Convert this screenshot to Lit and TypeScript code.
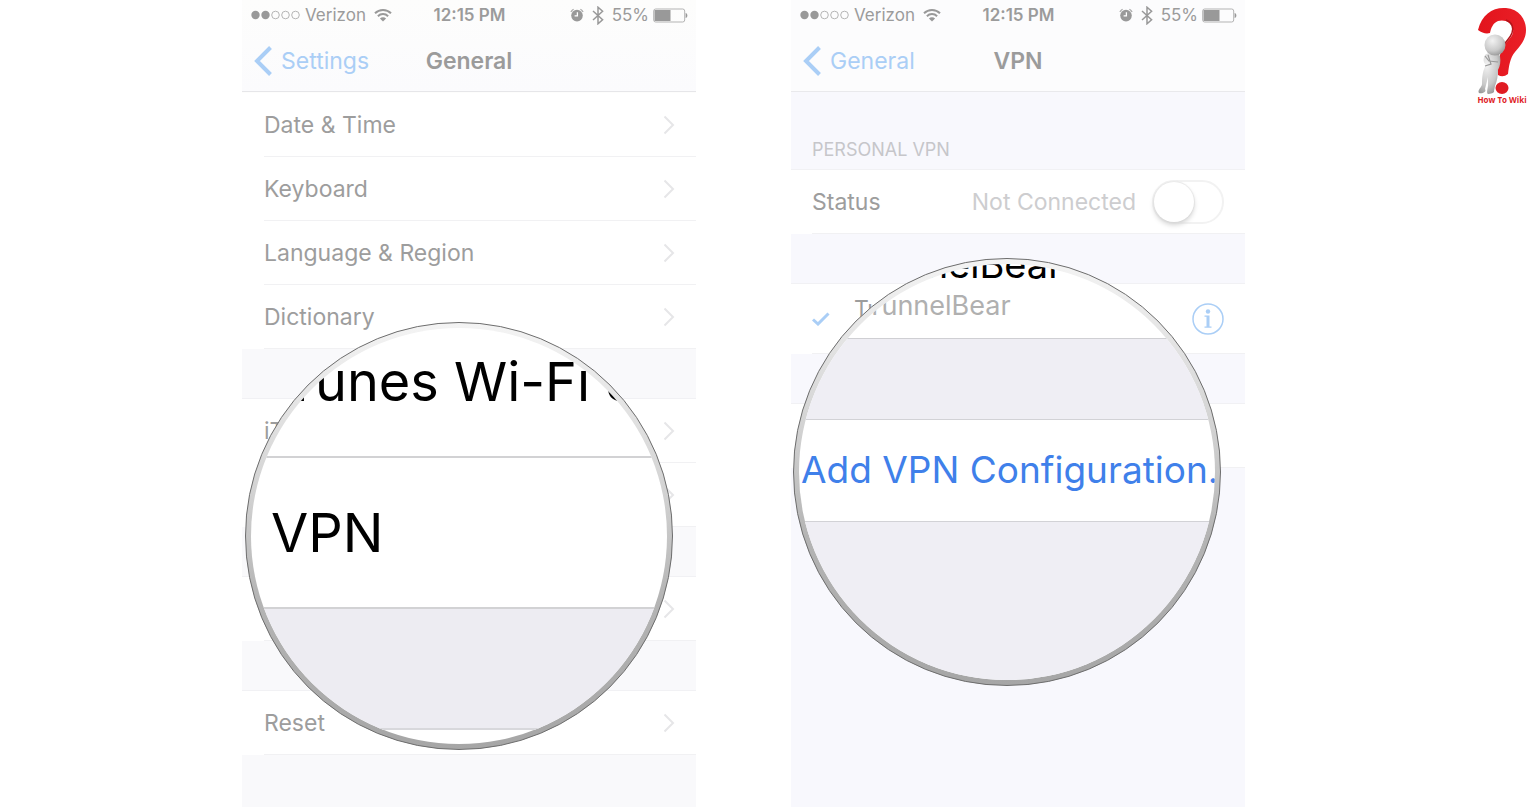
import { LitElement, html, css, svg, nothing } from "lit";
import { customElement, property } from "lit/decorators.js";

const shared = css`
  * {
    box-sizing: border-box;
  }
  a,
  button {
    font: inherit;
    color: inherit;
    text-decoration: none;
    background: none;
    border: 0;
    padding: 0;
    text-align: left;
  }
  svg {
    display: block;
    flex: none;
  }
`;

@customElement("phone-header")
export class PhoneHeader extends LitElement {
  @property() heading = "";
  @property() back = "";

  static styles = [
    shared,
    css`
      :host {
        display: block;
        border-bottom: 1px solid #e9e9ec;
        color: #9b9b9b;
      }
      .status {
        display: grid;
        grid-template-columns: 1fr auto 1fr;
        align-items: center;
        height: 30px;
        padding: 0 8px 0 9px;
        font-size: 17px;
      }
      .side {
        display: flex;
        align-items: center;
        gap: 8px;
      }
      .carrier {
        display: flex;
        align-items: center;
        gap: 5px;
      }
      .end {
        justify-content: flex-end;
      }
      .charge {
        display: flex;
        align-items: center;
        gap: 4px;
      }
      .time {
        font-weight: 600;
      }
      .nav {
        display: grid;
        grid-template-columns: 1fr auto 1fr;
        align-items: center;
        height: 61px;
        padding: 0 12px;
        font-size: 23px;
      }
      .back {
        display: flex;
        align-items: center;
        gap: 9px;
        color: #aacef6;
      }
      h1 {
        margin: 0;
        font-size: 23px;
        font-weight: 600;
      }
    `,
  ];

  render() {
    return html`
      <div class="status">
        <div class="side">
          <span class="carrier">
            <svg width="49" height="10" viewBox="0 0 49 10">
              ${[0, 1, 2, 3, 4].map(
                (i) => svg`<circle cx=${4.5 + i * 10} cy="5" r=${i < 2 ? 4.2 : 3.8}
                  fill=${i < 2 ? "#999" : "none"} stroke=${i < 2 ? "none" : "#b5b5b5"} />`
              )}
            </svg>
            Verizon
          </span>
          <svg width="18" height="14" viewBox="0 0 18 14" fill="none" stroke="#999" stroke-width="2">
            <path d="M1 5.2a11.4 11.4 0 0 1 16 0M3.9 8.2a7.3 7.3 0 0 1 10.2 0" />
            <path d="M9 13.6 5.9 10.5a4.4 4.4 0 0 1 6.2 0z" fill="#999" stroke="none" />
          </svg>
        </div>
        <span class="time">12:15 PM</span>
        <div class="side end">
          <svg width="14" height="14" viewBox="0 0 14 14">
            <circle cx="7" cy="7.6" r="5.8" fill="#999" />
            <path d="M.9 4A7 7 0 0 1 3.6 1.2M13.1 4a7 7 0 0 0-2.7-2.8" fill="none" stroke="#aaa" stroke-width="1.3" />
            <path d="M7.4 4.2v3.7H4.6" fill="none" stroke="#fff" stroke-width="1.3" />
          </svg>
          <svg width="12" height="19" viewBox="0 0 12 19" fill="none" stroke="#999" stroke-width="1.5">
            <path d="m1 5 9.6 8.8L6 17.8V1.2l4.6 4L1 14" />
          </svg>
          <span class="charge">
            55%
            <svg width="35" height="15" viewBox="0 0 35 15">
              <rect x=".7" y="1" width="31" height="13" rx="2" fill="none" stroke="#b3b3b3" />
              <path d="M1.5 2h16v11h-16z" fill="#999" />
              <path d="M32.6 5c2.4.6 2.4 4.4 0 5z" fill="#999" />
            </svg>
          </span>
        </div>
      </div>
      <nav class="nav">
        <a class="back" href="#">
          <svg width="18" height="30" viewBox="0 0 18 30" fill="none" stroke="#aacef6" stroke-width="4">
            <path d="M16.5 1.5 3 15l13.500 13.500" />
          </svg>
          ${this.back}
        </a>
        <h1>${this.heading}</h1>
        <span></span>
      </nav>
    `;
  }
}

@customElement("zoom-lens")
export class ZoomLens extends LitElement {
  static styles = css`
    :host {
      display: block;
      box-sizing: border-box;
      width: 428px;
      height: 428px;
      border: 1px solid #6d6d6d;
      border-radius: 50%;
      padding: 5px;
      background: linear-gradient(#f4f4f4, #d2d2d2 40%, #b4b4b4 65%, #a6a6a6);
    }
    .glass {
      display: flex;
      flex-direction: column;
      height: 100%;
      overflow: hidden;
      border-radius: 50%;
      background: #fff;
    }
  `;

  render() {
    return html`<div class="glass"><slot></slot></div>`;
  }
}

interface Item {
  label: string;
  name?: string;
}

const groups: Item[][] = [
  [{ label: "Date & Time" }, { label: "Keyboard" }, { label: "Language & Region" }, { label: "Dictionary" }],
  [{ label: "iTunes Wi-Fi Sync" }, { label: "", name: "VPN" }],
  [{ label: "", name: "Regulatory" }],
  [{ label: "Reset" }],
];

@customElement("app-root")
export class AppRoot extends LitElement {
  static styles = [
    shared,
    css`
      :host {
        display: block;
        position: relative;
        overflow: hidden;
        height: 100vh;
        min-height: 760px;
        background: #fff;
        font-family: Inter, "Liberation Sans", sans-serif;
        font-size: 23px;
        color: #9d9d9d;
      }
      .stage {
        display: flex;
        justify-content: center;
        gap: 95px;
        height: 100%;
        padding-right: 49px;
      }
      .phone {
        position: relative;
        flex: 0 1 454px;
        min-width: 0;
      }
      .general {
        background: #f9f9fb;
      }
      .vpn {
        background: #f8f8fd;
      }
      .general phone-header {
        background: linear-gradient(#fdfdfc, #fbfbfd);
        border-bottom: 3px double #e6e6e9;
      }
      .vpn phone-header {
        background: #fcfcfd;
      }
      .group {
        list-style: none;
        margin: 0 0 50px;
        padding: 0 0 0 22px;
        background: #fff;
        box-shadow: 0 -1px #f1f1f4;
      }
      .vpn .group {
        padding-left: 21px;
      }
      .row {
        display: flex;
        align-items: center;
        justify-content: space-between;
        height: 64px;
        padding-right: 21px;
        border-bottom: 1px solid #f1f1f3;
      }
      .group.first {
        margin-top: -1px;
        box-shadow: none;
      }
      .caption {
        margin: 0;
        padding: 47px 21px 9px;
        font-size: 18px;
        font-weight: 400;
        line-height: 22px;
        color: #c6c6ca;
      }
      .status {
        display: flex;
        align-items: center;
        gap: 16px;
        color: #cdcdcf;
      }
      .switch {
        appearance: none;
        display: block;
        width: 72px;
        height: 44px;
        margin: 0;
        border: 2px solid #f2f2f2;
        border-radius: 22px;
        background: #fff;
      }
      .switch::before {
        content: "";
        display: block;
        width: 40px;
        height: 40px;
        border-radius: 50%;
        background: #fff;
        box-shadow: 0 3px 5px #d4d4d4, 0 0 1px 1px #ececec;
      }
      .tall {
        height: 70px;
      }
      .connection {
        display: flex;
        align-items: center;
        gap: 24px;
      }
      .connection span {
        padding-bottom: 20px;
      }
      .lens {
        position: absolute;
      }
      .lens-general {
        left: 3px;
        top: 322px;
      }
      .lens-vpn {
        left: 2px;
        top: 258px;
      }
      .big {
        flex: none;
        display: flex;
        align-items: center;
        height: 151px;
        padding-left: 20px;
        border-bottom: 2px solid #d2d2d4;
        font-size: 54px;
        white-space: nowrap;
        color: #000;
      }
      .cut {
        margin-top: -21px;
      }
      .space {
        flex: none;
        height: 121px;
        background: #edecf2;
        border-bottom: 2px solid #d8d8dc;
      }
      .peek {
        flex: none;
        display: flex;
        flex-direction: column;
        gap: 6px;
        height: 75px;
        border-bottom: 1px solid #cfcfd3;
        line-height: 36px;
      }
      .peek-large {
        margin-top: -18px;
        padding-left: 60px;
        font-size: 38px;
        color: #000;
      }
      .peek-small {
        padding-left: 67px;
        font-size: 27px;
        color: #b0b0b0;
      }
      .band {
        flex: none;
        height: 81px;
        background: #efeef4;
        border-bottom: 1px solid #d2d2d6;
      }
      .config {
        flex: none;
        height: 102px;
        padding: 0 0 2px 2px;
        border-bottom: 1px solid #d2d2d6;
        font-size: 37px;
        white-space: nowrap;
        color: #3f80ea;
      }
      .rest {
        flex: 1;
        background: #efeef4;
      }
      .logo {
        position: absolute;
        top: 6px;
        right: 9px;
        display: flex;
        flex-direction: column;
        align-items: center;
        font: 700 8px/10px "Open Sans", sans-serif;
        color: #e0201f;
      }
    `,
  ];

  private general() {
    return html`
      <section class="phone general">
        <phone-header heading="General" back="Settings"></phone-header>
        ${groups.map(
          (items, g) => html`<ul class="group ${g === 0 ? "first" : ""}">
            ${items.map(
              (item) => html`<li>
                <a class="row" href="#" aria-label=${item.name ?? nothing}>
                  <span>${item.label}</span>
                  <svg width="12" height="20" viewBox="0 0 12 20" fill="none" stroke="#e6e6e8" stroke-width="2">
                    <path d="m1.5 1.5 8.500 8.500-8.500 8.500" />
                  </svg>
                </a>
              </li>`
            )}
          </ul>`
        )}
        <zoom-lens class="lens lens-general">
          <div class="big cut">iTunes Wi-Fi Sync</div>
          <div class="big">VPN</div>
          <div class="space"></div>
        </zoom-lens>
      </section>
    `;
  }

  private vpn() {
    return html`
      <section class="phone vpn">
        <phone-header heading="VPN" back="General"></phone-header>
        <h2 class="caption">PERSONAL VPN</h2>
        <div class="group">
          <div class="row">
            <label for="status">Status</label>
            <span class="status">
              Not Connected
              <input id="status" class="switch" type="checkbox" role="switch" />
            </span>
          </div>
        </div>
        <div class="group">
          <div class="row tall">
            <span class="connection">
              <svg width="18" height="14" viewBox="0 0 18 14" fill="none" stroke="#aacef6" stroke-width="3">
                <path d="m1 7.500 5 4.500L16.500 1.500" />
              </svg>
              <span>TunnelBear</span>
            </span>
            <button aria-label="TunnelBear details">
              <svg width="32" height="32" viewBox="0 0 32 32">
                <circle cx="16" cy="16" r="15" fill="none" stroke="#aacef6" stroke-width="1.5" />
                <circle cx="16" cy="8.5" r="2.2" fill="#aacef6" />
                <path d="M12.500 12.500h5v11h2v1.300h-7v-1.300h2v-9.700h-2z" fill="#aacef6" />
              </svg>
            </button>
          </div>
        </div>
        <div class="group">
          <div class="row"></div>
        </div>
        <zoom-lens class="lens lens-vpn">
          <div class="peek">
            <div class="peek-large">TunnelBear</div>
            <div class="peek-small">TunnelBear</div>
          </div>
          <div class="band"></div>
          <button class="config">Add VPN Configuration...</button>
          <div class="rest"></div>
        </zoom-lens>
      </section>
    `;
  }

  private logo() {
    return html`
      <a class="logo" href="#">
        <svg width="50" height="89" viewBox="0 0 50 89">
          <defs>
            <radialGradient id="skin" cx=".38" cy=".3" r=".8">
              <stop offset="0" stop-color="#f2f2f2" />
              <stop offset=".6" stop-color="#c9c9c9" />
              <stop offset="1" stop-color="#8c8c8c" />
            </radialGradient>
            <linearGradient id="red" x1="0" x2="1">
              <stop offset="0" stop-color="#e2141c" />
              <stop offset="1" stop-color="#ea1f27" />
            </linearGradient>
          </defs>
          <path
            d="M1 24C5 8 16 1 29 2c13 1 20 11 20 22 0 10-6 16-11 22-5 6-6 14-7 22q-5 4-10 1c-1-13 2-23 7-31 5-6 9-9 8-15-1-7-9-10-15-8-5 2-7 7-8 12-4 1-8 0-12-3z"
            fill="url(#red)" />
          <path d="M29 14c6 2 8 8 6 13-2 6-8 9-10 16" fill="none" stroke="#b3151b" stroke-width="1.5" />
          <ellipse cx="25" cy="82" rx="6.500" ry="6" fill="#e01b22" />
          <path
            d="M8 49c4-3 12-3 15 1 1 6 0 10-2 14 0 6-1 11-3 16l-1 5c1 2-4 3-6 3-2-1 0-6 0-9v-8l-3 12c2 3-3 5-6 4-2-3 3-6 3-9 0-8 1-14 4-19-3-3-3-6-1-10z"
            fill="url(#skin)" />
          <path d="m8 50 4 5 9 1M8 60l6-2-3-9" fill="none" stroke="#999" stroke-width="1.200" />
          <circle cx="18" cy="39" r="10.500" fill="url(#skin)" />
        </svg>
        How To Wiki
      </a>
    `;
  }

  render() {
    return html`
      <main class="stage">${this.general()} ${this.vpn()}</main>
      ${this.logo()}
    `;
  }
}
